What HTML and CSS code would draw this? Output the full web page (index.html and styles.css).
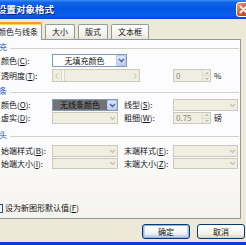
FILE: index.html
```html
<!DOCTYPE html>
<html lang="zh-CN">
<head>
<meta charset="utf-8">
<link rel="stylesheet" href="styles.css">
</head>
<body>
<div class="dialog">
  <div class="titlebar">
    <span class="title">设置对象格式</span>
    <span class="close"><svg width="9" height="9" viewBox="0 0 9 9"><path d="M1.5 1.5L7.5 7.5M7.5 1.5L1.5 7.5" stroke="#fff" stroke-width="1.8" stroke-linecap="round"/></svg></span>
  </div>
  <div class="frame">
    <div class="tabs">
      <div class="tab active">颜色与线条</div>
      <div class="tab">大小</div>
      <div class="tab">版式</div>
      <div class="tab">文本框</div>
    </div>
    <div class="panel">
      <div class="sec"><span>填充</span><i class="rule"></i></div>
      <div class="row r1">
        <span class="lbl">颜色(<u>C</u>):</span>
        <div class="combo w75"><span class="val">无填充颜色</span><span class="dd blue"><svg width="7" height="5" viewBox="0 0 7 5"><path d="M1 1L3.5 3.5L6 1" fill="none" stroke="#4d6185" stroke-width="1.4"/></svg></span></div>
      </div>
      <div class="row r2">
        <span class="lbl">透明度(<u>T</u>):</span>
        <div class="slider"><span class="sa"><svg width="4" height="6" viewBox="0 0 4 6"><path d="M3 0.5L0.8 3L3 5.5" fill="none" stroke="#c2c0b2" stroke-width="1"/></svg></span><span class="thumb"></span><span class="track"></span><span class="sa"><svg width="4" height="6" viewBox="0 0 4 6"><path d="M1 0.5L3.2 3L1 5.5" fill="none" stroke="#c2c0b2" stroke-width="1"/></svg></span></div>
        <div class="spin sp-gap"><span class="sv">0</span><span class="sb"><i class="up"></i><i class="dn"></i></span></div>
        <span class="suf">%</span>
      </div>
      <div class="sec s2"><span>线条</span><i class="rule"></i></div>
      <div class="row r3">
        <span class="lbl">颜色(<u>O</u>):</span>
        <div class="combo w66 dark"><span class="val">无线条颜色</span><span class="dd blue"><svg width="7" height="5" viewBox="0 0 7 5"><path d="M1 1L3.5 3.5L6 1" fill="none" stroke="#4d6185" stroke-width="1.4"/></svg></span></div>
        <span class="lbl2">线型(<u>S</u>):</span>
        <div class="combo w65 dis"><span class="val"></span><span class="dd"><svg width="7" height="5" viewBox="0 0 7 5"><path d="M1 1L3.5 3.5L6 1" fill="none" stroke="#c2c0b2" stroke-width="1.2"/></svg></span></div>
      </div>
      <div class="row r4">
        <span class="lbl">虚实(<u>D</u>):</span>
        <div class="combo w66 dis"><span class="val"></span><span class="dd"><svg width="7" height="5" viewBox="0 0 7 5"><path d="M1 1L3.5 3.5L6 1" fill="none" stroke="#c2c0b2" stroke-width="1.2"/></svg></span></div>
        <span class="lbl2">粗细(<u>W</u>):</span>
        <div class="spin"><span class="sv">0.75</span><span class="sb"><i class="up"></i><i class="dn"></i></span></div>
        <span class="suf">磅</span>
      </div>
      <div class="sec s3"><span>箭头</span><i class="rule"></i></div>
      <div class="row r5">
        <span class="lbl">始端样式(<u>B</u>):</span>
        <div class="combo w66 dis"><span class="val"></span><span class="dd"><svg width="7" height="5" viewBox="0 0 7 5"><path d="M1 1L3.5 3.5L6 1" fill="none" stroke="#c2c0b2" stroke-width="1.2"/></svg></span></div>
        <span class="lbl2">末端样式(<u>E</u>):</span>
        <div class="combo w65 dis"><span class="val"></span><span class="dd"><svg width="7" height="5" viewBox="0 0 7 5"><path d="M1 1L3.5 3.5L6 1" fill="none" stroke="#c2c0b2" stroke-width="1.2"/></svg></span></div>
      </div>
      <div class="row r6">
        <span class="lbl">始端大小(<u>I</u>):</span>
        <div class="combo w66 dis"><span class="val"></span><span class="dd"><svg width="7" height="5" viewBox="0 0 7 5"><path d="M1 1L3.5 3.5L6 1" fill="none" stroke="#c2c0b2" stroke-width="1.2"/></svg></span></div>
        <span class="lbl2">末端大小(<u>Z</u>):</span>
        <div class="combo w65 dis"><span class="val"></span><span class="dd"><svg width="7" height="5" viewBox="0 0 7 5"><path d="M1 1L3.5 3.5L6 1" fill="none" stroke="#c2c0b2" stroke-width="1.2"/></svg></span></div>
      </div>
      <div class="check">
        <span class="box"></span>
        <span class="ctext">设为新图形默认值(<u>F</u>)</span>
      </div>
    </div>
    <div class="buttons">
      <div class="btn def">确定</div>
      <div class="btn">取消</div>
    </div>
  </div>
</div>
</body>
</html>
```

FILE: styles.css
```css
* { box-sizing: border-box; margin: 0; padding: 0; }
html, body { width: 246px; height: 245px; overflow: hidden; }
body {
  background: #ece9d8;
  font-family: "Noto Sans CJK SC", "Noto Sans CJK JP", sans-serif;
  font-size: 8px;
  line-height: 1;
  color: #111;
}
u { text-decoration: underline; }
.dialog {
  width: 268px;
  height: 245px;
  margin-left: -16px;
  display: flex;
  flex-direction: column;
}
.titlebar {
  height: 19px;
  flex: none;
  display: flex;
  align-items: center;
  padding-left: 13px;
  background: linear-gradient(#3d8ef6 0%, #0d63e2 14%, #0558e4 45%, #0a5fea 80%, #0048d2 100%);
}
.title {
  color: #fff;
  font-weight: bold;
  font-size: 9.5px;
  text-shadow: 1px 1px 0 #0a1c70;
}
.close {
  margin-left: auto;
  margin-right: 1px;
  width: 15px;
  height: 15px;
  border: 1px solid #fff;
  border-radius: 3px;
  background: linear-gradient(135deg, #f2a88d, #dc5430 50%, #c13a13);
  display: flex;
  align-items: center;
  justify-content: center;
}
.frame {
  flex: 1;
  border: 3px solid #0b3fd4;
  border-top: 0;
  background: #ece9d8;
  padding: 3px 8px 3px 1px;
  display: flex;
  flex-direction: column;
}
.tabs {
  display: flex;
  align-items: flex-end;
  height: 17px;
  flex: none;
  position: relative;
  z-index: 1;
}
.tab {
  height: 15px;
  padding: 0 6px;
  margin-left: 3px;
  border: 1px solid #919b9c;
  border-bottom: 0;
  border-radius: 2px 2px 0 0;
  background: linear-gradient(#fff, #f4f3ee 60%, #e9e7dc);
  display: flex;
  align-items: center;
  white-space: nowrap;
}
.tab.active {
  width: 54px;
  height: 18px;
  margin-left: 0;
  margin-bottom: -1px;
  padding: 0 0 0 9px;
  background: #fcfcfe;
  border-top: 2px solid #ec9b35;
  box-shadow: inset 0 1px 0 #ffd35e;
}
.panel {
  height: 180px;
  flex: none;
  border: 1px solid #919b9c;
  background: linear-gradient(#fcfcfe 55%, #f4f3ee);
  padding: 2px 1px 5px 2px;
  display: flex;
  flex-direction: column;
}
.sec {
  display: flex;
  align-items: center;
  height: 10px;
  color: #2352c9;
  flex: none;
}
.sec .rule {
  flex: 1;
  height: 1px;
  background: #d3d1c5;
  margin-left: 3px;
  margin-top: 3px;
}
.sec.s2 { margin-top: 4px; }
.sec.s3 { margin-top: 6px; }
.row {
  display: flex;
  align-items: center;
  height: 13px;
  margin-left: 10px;
  flex: none;
  white-space: nowrap;
}
.r1 { margin-top: 2px; }
.r2 { margin-top: 2px; }
.r3 { margin-top: 3px; height: 12px; }
.r4 { margin-top: 1px; height: 12px; }
.r5 { margin-top: 5px; height: 12px; }
.r6 { margin-top: 1px; height: 11px; }
.lbl { width: 51px; }
.lbl2 { width: 49px; margin-left: 6px; }
.combo {
  height: 100%;
  display: flex;
  border: 1px solid #7f9db9;
  background: #fff;
}
.w75 { width: 75px; }
.w66 { width: 66px; }
.w65 { width: 65px; }
.combo .val {
  flex: 1;
  display: flex;
  align-items: center;
  justify-content: center;
}
.combo .dd {
  width: 10px;
  display: flex;
  align-items: center;
  justify-content: center;
}
.combo .dd.blue {
  background: linear-gradient(#dce6fd, #bccdf8);
  border: 1px solid #b5c8f4;
  border-radius: 1px;
}
.combo.dark { background: #737373; border-color: #7f9db9; }
.combo.dark .val { color: #101010; }
.combo.dis { border-color: #cbc9bc; background: #f0eee0; }
.slider {
  width: 88px;
  height: 100%;
  display: flex;
  border: 1px solid #cbc9bc;
  background: #f0eee0;
}
.slider .sa {
  width: 8px;
  display: flex;
  align-items: center;
  justify-content: center;
}
.slider .thumb {
  width: 4px;
  border-left: 1px solid #d8d6c8;
  border-right: 1px solid #d8d6c8;
  background: #f6f5ee;
}
.slider .track { flex: 1; }
.spin {
  width: 38px;
  height: 100%;
  display: flex;
  border: 1px solid #cbc9bc;
  background: #f0eee0;
  color: #8a8878;
}
.sp-gap { margin-left: 33px; }
.spin .sv {
  flex: 1;
  display: flex;
  align-items: center;
  padding-left: 2px;
}
.spin .sb {
  width: 8px;
  display: flex;
  flex-direction: column;
  border-left: 1px solid #dddbcf;
}
.spin .sb i {
  flex: 1;
  display: flex;
  align-items: center;
  justify-content: center;
}
.spin .sb i::before {
  content: "";
  border-left: 2px solid transparent;
  border-right: 2px solid transparent;
}
.spin .sb i.up::before { border-bottom: 2px solid #bcbaaa; }
.spin .sb i.dn::before { border-top: 2px solid #bcbaaa; }
.spin .sb i.up { border-bottom: 1px solid #dddbcf; }
.suf { margin-left: 3px; }
.check {
  margin-top: auto;
  display: flex;
  align-items: center;
  height: 10px;
  margin-left: 3px;
}
.check .box {
  width: 9px;
  height: 9px;
  border: 1px solid #1c5180;
  background: linear-gradient(135deg, #dcdcd7, #fff);
}
.check .ctext { margin-left: 2px; }
.buttons {
  display: flex;
  justify-content: flex-end;
  gap: 7px;
  margin-top: 5px;
  margin-right: -4px;
  flex: none;
}
.btn {
  width: 48px;
  height: 15px;
  border: 1px solid #003c74;
  border-radius: 3px;
  background: linear-gradient(#fff, #f4f3ee 65%, #d8d2c6);
  display: flex;
  align-items: center;
  justify-content: center;
}
.btn.def { box-shadow: inset 0 0 0 1px #98b4e6, inset 0 -1px 0 2px #c6d5f6; }
```
